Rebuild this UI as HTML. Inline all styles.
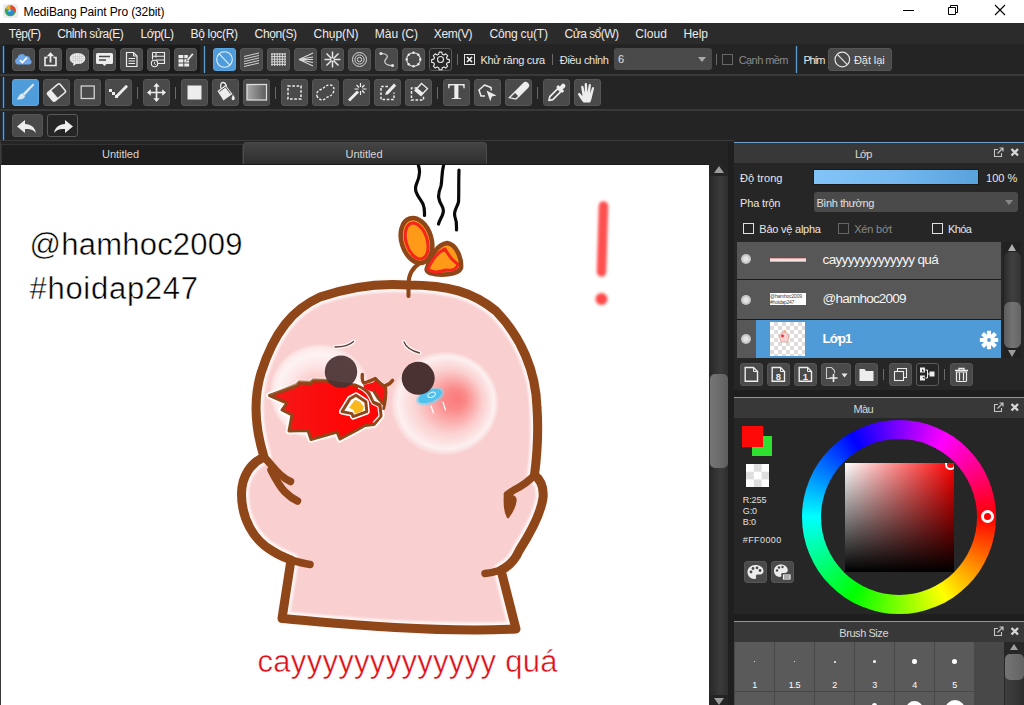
<!DOCTYPE html>
<html lang="vi">
<head>
<meta charset="utf-8">
<title>MediBang Paint Pro (32bit)</title>
<style>
*{box-sizing:border-box;margin:0;padding:0}
html,body{width:1024px;height:705px;overflow:hidden;background:#242424}
body{position:relative;font-family:"Liberation Sans","DejaVu Sans",sans-serif;font-size:12px;color:#e6e6e6}
.abs{position:absolute}
#title{left:0;top:0;width:1024px;height:23px;background:#fff;color:#000}
#title .t{left:23.400px;top:5px;font-size:12px;letter-spacing:-0.12px;white-space:nowrap}
#menu{left:0;top:23px;width:1024px;height:22px;background:#2b2b2b;border-bottom:1px solid #3c3c3c}
#menu span{position:absolute;top:4px;font-size:12px;white-space:nowrap;color:#ececec;letter-spacing:-0.2px}
#tb{left:0;top:44px;width:1024px;height:98px;background:#242424}
.hl{position:absolute;height:2px;background:#393939}
.btn{position:absolute;background:#4a4a4a;border:1px solid #555;border-radius:3px}
.btn.sel{background:#4f9cdb;border-color:#5aa6e2}
.btn svg{position:absolute;left:-1px;top:-1px;width:calc(100% + 2px);height:calc(100% + 2px)}
.vsep{position:absolute;width:1px;background:#6a6a6a}
.bl{position:absolute;width:1px;background:#5b9bd0;box-shadow:-1px 0 0 #1e3a55,1px 0 0 #1e3a55}
.sec{position:absolute;background:#1b1b1b}
.btn.dark{background:#262626;border-color:#5a5a5a}
.chk{position:absolute;width:11px;height:11px;border:1px solid #e0e0e0}
.chk svg{position:absolute;left:-1px;top:-1px}
.chk.dis{border-color:#666}
.lbl.dis{color:#8a8a8a}
.dd{position:absolute;background:#4a4a4a;border-radius:3px}
.dd span{position:absolute;left:4px;top:5px;font-size:11px;color:#e0e0e0;white-space:nowrap}
.dd i{position:absolute;right:6px;top:9px;border:4px solid transparent;border-top:5px solid #aaa;border-bottom:0}
.bt{position:absolute;white-space:nowrap;font-size:11px;letter-spacing:-0.08px;color:#e6e6e6}
.T{position:absolute;left:0;top:-2px;width:25px;text-align:center;font-family:"Liberation Serif","DejaVu Serif",serif;font-weight:bold;font-size:24px;line-height:27px;color:#ededed;transform:scaleX(1.08)}
.tab1{background:#1e1e1e;border:1px solid #333;border-bottom:0}
.tab2{background:linear-gradient(#444,#2e2e2e);border:1px solid #4a4a4a;border-bottom:0;border-radius:4px 4px 0 0}
.tab1 span,.tab2 span{position:absolute;left:0;width:100%;text-align:center;font-size:11px;letter-spacing:-0.04px;color:#d6d6d6}
.tab1 span{top:3px}.tab2 span{top:5px}
.phead{left:734px;width:290px;height:21px;background:#383838;border-top:1px solid #6fa3c8;position:absolute}
.phead span{position:absolute;top:5px;font-size:11px;letter-spacing:-0.2px;color:#d8d8d8;white-space:nowrap}
.lrow{left:737px;width:264px;background:#575757}
.eye{position:absolute;left:4px;top:50%;margin-top:-5px;width:10px;height:10px;border-radius:50%;background:radial-gradient(#e4e4e4 25%,#c4c4c4 60%)}
.ln{position:absolute;left:85.600px;font-size:13.5px;color:#f4f4f4;white-space:nowrap}
.sm{font-size:9px;color:#e0e0e0;white-space:nowrap;letter-spacing:-0.1px}
.cell{position:absolute;width:39px;background:#5a5a5a}
.cell i{position:absolute;border-radius:50%;background:#fff}
.cell span{position:absolute;left:0;width:100%;text-align:center;top:38px;font-size:9px;color:#fff;letter-spacing:-0.3px}
.lbl{position:absolute;white-space:nowrap;font-size:11px;letter-spacing:-0.3px;color:#e6e6e6}
</style>
</head>
<body>
<!-- TITLE BAR -->
<div id="title" class="abs">
  <svg class="abs" style="left:3px;top:4px" width="15" height="14" viewBox="0 0 15 14">
    <rect x="0" y="0" width="15" height="14" rx="2.500" fill="#ececec"/>
    <circle cx="7.300" cy="6.800" r="5.500" fill="#3aa857"/>
    <path d="M7.300 1.300a5.500 5.500 0 0 1 5.200 7.300l-5.200-1.800z" fill="#e9482c"/>
    <path d="M7.300 1.300a5.500 5.500 0 0 0-4.800 2.800l4.800 2.700z" fill="#f2b02a"/>
    <circle cx="7.600" cy="8" r="3" fill="#2d86d8"/>
    <circle cx="6.600" cy="6.600" r="1.500" fill="#7ed0e8"/>
  </svg>
  <div class="abs t">MediBang Paint Pro (32bit)</div>
  <svg class="abs" style="left:886px;top:0" width="138" height="23" viewBox="0 0 138 23">
    <path d="M17 10.5h11" stroke="#000" stroke-width="1" fill="none"/>
    <path d="M62.5 7.500h7v7h-7z M64.500 7.500v-2h7v7h-2" stroke="#000" stroke-width="1" fill="none"/>
    <path d="M109 5l10 10M119 5l-10 10" stroke="#000" stroke-width="1.1" fill="none"/>
  </svg>
</div>
<!-- MENU BAR -->
<div id="menu" class="abs">
  <span style="left:8.800px;letter-spacing:-0.76px">Tệp(F)</span>
  <span style="left:57.300px;letter-spacing:-0.44px">Chỉnh sửa(E)</span>
  <span style="left:140.600px;letter-spacing:-0.50px">Lớp(L)</span>
  <span style="left:190.600px;letter-spacing:-0.33px">Bộ lọc(R)</span>
  <span style="left:254.600px;letter-spacing:-0.38px">Chọn(S)</span>
  <span style="left:313.600px;letter-spacing:-0.06px">Chụp(N)</span>
  <span style="left:374.800px;letter-spacing:-0.02px">Màu (C)</span>
  <span style="left:433.800px;letter-spacing:-0.39px">Xem(V)</span>
  <span style="left:489.400px;letter-spacing:-0.16px">Công cụ(T)</span>
  <span style="left:564.600px;letter-spacing:-0.54px">Cửa sổ(W)</span>
  <span style="left:635.300px;letter-spacing:0.09px">Cloud</span>
  <span style="left:683.500px;letter-spacing:-0.06px">Help</span>
</div>

<!-- TOOLBARS -->
<div id="tb" class="abs">
  <div class="hl" style="left:0;top:30px;width:1024px"></div>
  <div class="hl" style="left:0;top:65px;width:1024px"></div>
  <div class="hl" style="left:0;top:96px;width:734px;height:1px"></div>
  <div class="sec" style="left:5px;top:1px;width:195px;height:28px"></div>
  <div class="bl" style="left:3px;top:2px;height:27px"></div>
  <div class="bl" style="left:3px;top:33px;height:31px"></div>
  <div class="bl" style="left:3px;top:68px;height:28px"></div>
  <div class="bl" style="left:204px;top:2px;height:27px"></div>
  <div class="bl" style="left:796px;top:2px;height:27px"></div>
  <div class="btn" style="left:12px;top:4px;width:23px;height:23px"><svg viewBox="0 0 23 23"><path d="M6.200 16.500a3.300 3.300 0 0 1-.6-6.500a4.200 4.200 0 0 1 7.800-1.900a3.600 3.600 0 0 1 4.800 3.500a2.600 2.600 0 0 1-.9 4.900z" fill="#6ea6e8"/><path d="M8 12.200l2.300 2.300l4.600-4.800" stroke="#fff" stroke-width="1.700" fill="none"/></svg></div>
  <div class="btn" style="left:39px;top:4px;width:23px;height:23px"><svg viewBox="0 0 23 23"><path d="M8.500 9.500h-2.500v8h11v-8h-2.500" stroke="#ededed" stroke-width="1.600" fill="none"/><path d="M11.500 14.500v-9" stroke="#ededed" stroke-width="1.800"/><path d="M7.800 8.200l3.700-4l3.700 4z" fill="#ededed"/></svg></div>
  <div class="btn" style="left:66px;top:4px;width:23px;height:23px"><svg viewBox="0 0 23 23"><ellipse cx="11.500" cy="10.500" rx="7.800" ry="5.600" fill="#ededed"/><path d="M7.500 14l-.3 4l4-2.800z" fill="#ededed"/><path d="M5 8.500h13M4 10.500h15M5 12.500h13M7.500 5v11M9.500 5v11M11.500 5v11M13.500 5v11M15.500 5v11" stroke="#bdbdbd" stroke-width=".5"/></svg></div>
  <div class="btn" style="left:93px;top:4px;width:23px;height:23px"><svg viewBox="0 0 23 23"><path d="M4.500 5h14a1.500 1.500 0 0 1 1.500 1.500v8a1.500 1.500 0 0 1-1.500 1.500h-5l-2 2l-2-2h-5a1.500 1.500 0 0 1-1.500-1.500v-8a1.500 1.500 0 0 1 1.500-1.500z" fill="#ededed"/><path d="M6 8.500h11M6 12h7" stroke="#4a4a4a" stroke-width="1.600"/></svg></div>
  <div class="btn" style="left:120px;top:4px;width:23px;height:23px"><svg viewBox="0 0 23 23"><path d="M6.500 4.500h7l3.500 3.500v10.500h-10.500z" stroke="#ededed" stroke-width="1.200" fill="none"/><path d="M13.500 4.500v3.500h3.500" stroke="#ededed" stroke-width="1" fill="none"/><path d="M8.500 10.500h6.500M8.500 13h6.500M8.500 15.500h6.500" stroke="#ededed" stroke-width="1.100"/></svg></div>
  <div class="btn" style="left:147px;top:4px;width:23px;height:23px"><svg viewBox="0 0 23 23"><path d="M5.500 4.500h12v11h-7M5.500 4.500v7M5.500 8.200h12M9 12h8.500M9 4.500v5" stroke="#ededed" stroke-width="1.100" fill="none"/><circle cx="7.500" cy="15.500" r="3.200" stroke="#ededed" stroke-width="1.100" fill="#4a4a4a"/><path d="M7.500 13.800v1.900l1.300 1" stroke="#ededed" stroke-width=".9" fill="none"/></svg></div>
  <div class="btn" style="left:174px;top:4px;width:23px;height:23px"><svg viewBox="0 0 23 23"><path d="M4.500 7h4.800v3.300h-4.800zM10.300 7h3.500v3.300h-3.500zM4.500 11.300h4.800v3.200h-4.800zM10.300 11.300h4.800v3.200h-4.800zM4.500 15.500h4.800v3h-4.800zM10.300 15.500h4.800v3h-4.800z" fill="#ededed"/><path d="M13 11l5.200-6l1.600 1.400l-5.200 6l-2.200.8z" fill="#ededed" stroke="#4a4a4a" stroke-width=".6"/></svg></div>
  <div class="btn sel" style="left:213px;top:4px;width:23px;height:23px"><svg viewBox="0 0 23 23"><circle cx="11.500" cy="11.500" r="7.800" stroke="#e4f0fa" stroke-width="1.100" fill="none"/><path d="M6.200 5.800l10.600 11.400" stroke="#e4f0fa" stroke-width="1.100"/></svg></div>
  <div class="btn" style="left:240px;top:4px;width:23px;height:23px"><svg viewBox="0 0 23 23"><path d="M4 8.500l15-3.500M4 11l15-3.500M4 13.500l15-3.500M4 16l15-3.500M4 18.500l15-3.500" stroke="#cfcfcf" stroke-width="1"/></svg></div>
  <div class="btn" style="left:267px;top:4px;width:23px;height:23px"><svg viewBox="0 0 23 23"><path d="M5 5v13M7.600 5v13M10.200 5v13M12.800 5v13M15.400 5v13M18 5v13M4 6h15M4 8.600h15M4 11.200h15M4 13.800h15M4 16.400h15" stroke="#d8d8d8" stroke-width="1"/></svg></div>
  <div class="btn" style="left:294px;top:4px;width:23px;height:23px"><svg viewBox="0 0 23 23"><path d="M5 11.500l14-6.500M5 11.500l14-2.500M5 11.500h14M5 11.500l14 3M5 11.500l14 6.500" stroke="#d8d8d8" stroke-width="1.100"/></svg></div>
  <div class="btn" style="left:321px;top:4px;width:23px;height:23px"><svg viewBox="0 0 23 23"><path d="M11.500 3.500v16M3.500 11.500h16M5.500 5.500l12 12M17.500 5.500l-12 12" stroke="#e4e4e4" stroke-width="1.500"/><circle cx="11.500" cy="11.500" r="1.300" fill="#4a4a4a"/></svg></div>
  <div class="btn" style="left:348px;top:4px;width:23px;height:23px"><svg viewBox="0 0 23 23"><circle cx="11.500" cy="11.500" r="7" stroke="#d8d8d8" stroke-width="1" fill="none"/><circle cx="11.500" cy="11.500" r="4.600" stroke="#d8d8d8" stroke-width="1" fill="none"/><circle cx="11.500" cy="11.500" r="2.200" stroke="#d8d8d8" stroke-width="1" fill="none"/></svg></div>
  <div class="btn" style="left:375px;top:4px;width:23px;height:23px"><svg viewBox="0 0 23 23"><path d="M6 5.500c6.500 0 7.500 3 5 5.500s-1.500 6.500 6.500 6.500" stroke="#c8c8c8" stroke-width="1.200" fill="none"/><circle cx="6" cy="5.500" r="1.600" fill="#e4e4e4"/><circle cx="17.500" cy="17.500" r="1.600" fill="#e4e4e4"/></svg></div>
  <div class="btn" style="left:402px;top:4px;width:23px;height:23px"><svg viewBox="0 0 23 23"><circle cx="11.500" cy="11.500" r="6.800" stroke="#e0e0e0" stroke-width="1.100" fill="none"/><g fill="#ededed"><circle cx="11.500" cy="4.700" r="1.200"/><circle cx="11.500" cy="18.300" r="1.200"/><circle cx="4.700" cy="11.500" r="1.200"/><circle cx="18.300" cy="11.500" r="1.200"/><circle cx="6.700" cy="6.700" r="1.200"/><circle cx="16.300" cy="6.700" r="1.200"/><circle cx="6.700" cy="16.300" r="1.200"/><circle cx="16.300" cy="16.300" r="1.200"/></g></svg></div>
  <div class="btn dark" style="left:429px;top:4px;width:23px;height:23px"><svg viewBox="0 0 23 23"><circle cx="11.500" cy="11.500" r="3" stroke="#e4e4e4" stroke-width="1.100" fill="none"/><path d="M10.200 4.500h2.600l.4 2l1.500.7l1.800-1.100l1.800 1.800l-1.100 1.800l.7 1.500l2 .4v2.600l-2 .4l-.7 1.500l1.100 1.800l-1.800 1.800l-1.800-1.100l-1.500.7l-.4 2h-2.600l-.4-2l-1.500-.7l-1.800 1.100l-1.800-1.800l1.100-1.800l-.7-1.500l-2-.4v-2.600l2-.4l.7-1.500l-1.100-1.800l1.800-1.800l1.800 1.100l1.500-.7z" stroke="#e4e4e4" stroke-width="1.100" fill="none" stroke-linejoin="round" transform="translate(-.58 -.58) scale(1.050)"/></svg></div>
  <div class="vsep" style="left:457px;top:10px;height:11px"></div>
  <div class="chk" style="left:464px;top:10px"><svg viewBox="0 0 11 11" width="11" height="11"><path d="M3 3l5 5M8 3l-5 5" stroke="#f0f0f0" stroke-width="1.700"/></svg></div>
  <div class="lbl" style="left:480.500px;top:10px;letter-spacing:-0.29px">Khử răng cưa</div>
  <div class="vsep" style="left:552px;top:10px;height:11px"></div>
  <div class="lbl" style="left:559.800px;top:10px;letter-spacing:-0.31px">Điều chỉnh</div>
  <div class="dd" style="left:614px;top:4px;width:98px;height:22px"><span>6</span><i></i></div>
  <div class="vsep" style="left:716px;top:10px;height:11px"></div>
  <div class="chk dis" style="left:722px;top:10px"></div>
  <div class="lbl dis" style="left:738.700px;top:10px;letter-spacing:-0.57px">Cạnh mềm</div>
  <div class="lbl" style="left:803.400px;top:10px;letter-spacing:-1.23px">Phím</div>
  <div class="btn" style="left:828px;top:4px;width:64px;height:23px"><svg viewBox="0 0 64 23"><circle cx="14.300" cy="11.500" r="7.300" stroke="#e4e4e4" stroke-width="1.200" fill="none"/><path d="M9.300 6.300l10 10.400" stroke="#e4e4e4" stroke-width="1.200"/></svg><span class="bt" style="left:25px;top:5px">Đặt lại</span></div>
  <div class="btn sel" style="left:12px;top:35px;width:27px;height:27px"><svg viewBox="0 0 27 27"><path d="M20.300 5c1.100-.8 2.300.4 1.500 1.500l-9 9.800l-1.900-1.900z" fill="#dbe9f5"/><path d="M10.300 14.200l2.600 2.600c.3 2.800-3.500 4.200-8.300 3.400c2-.8 1.800-5 5.700-6z" fill="#dbe9f5"/></svg></div>
  <div class="btn" style="left:43px;top:35px;width:27px;height:27px"><svg viewBox="0 0 27 27"><g transform="rotate(-40 13.500 13.500)"><rect x="5.500" y="8" width="16" height="11" rx="1.800" stroke="#ededed" stroke-width="1.500" fill="none"/><path d="M5.500 9.800a1.800 1.800 0 0 1 1.800-1.800h3.700v11h-3.700a1.800 1.800 0 0 1-1.800-1.800z" fill="#ededed"/></g></svg></div>
  <div class="btn" style="left:74px;top:35px;width:27px;height:27px"><svg viewBox="0 0 27 27"><rect x="7.200" y="7" width="13" height="12.500" stroke="#d4d4d4" stroke-width="1.300" fill="none"/></svg></div>
  <div class="btn" style="left:105px;top:35px;width:27px;height:27px"><svg viewBox="0 0 27 27"><path d="M11.500 15.500l9.500-9.800l2 2l-9.500 9.800l-3 1z" fill="#ededed"/><path d="M4 10h3v3h-3zM7 13h3v3h-3zM10 16h3v3h-3z" fill="#ededed"/></svg></div>
  <div class="vsep" style="left:137px;top:43px;height:12px"></div>
  <div class="btn" style="left:143px;top:35px;width:27px;height:27px"><svg viewBox="0 0 27 27"><path d="M13.500 6v15M6 13.500h15" stroke="#ededed" stroke-width="1.700"/><path d="M13.500 4l3.200 3.800h-6.400zM13.500 23l3.200-3.800h-6.400zM4 13.500l3.800-3.200v6.400zM23 13.500l-3.800-3.200v6.400z" fill="#ededed"/></svg></div>
  <div class="vsep" style="left:175px;top:43px;height:12px"></div>
  <div class="btn" style="left:181px;top:35px;width:27px;height:27px"><svg viewBox="0 0 27 27"><rect x="6.500" y="6.500" width="14" height="14" fill="#ededed"/></svg></div>
  <div class="btn" style="left:212px;top:35px;width:27px;height:27px"><svg viewBox="0 0 27 27"><path d="M5.500 12l8-6l7 9l-9 6.500z" fill="#ededed"/><path d="M9 9.500c-1-3.500 0-6 2-6s3 2 3.500 4" stroke="#ededed" stroke-width="1.300" fill="none"/><path d="M21 15.500c1.500 2.500 2.500 4 1.200 5.300c-1.200 1-3 0-2.500-2z" fill="#ededed"/><path d="M7.500 12.500l6-4.500l5 6.500" stroke="#4a4a4a" stroke-width="1" fill="none"/></svg></div>
  <div class="btn" style="left:243px;top:35px;width:27px;height:27px"><svg viewBox="0 0 27 27"><defs><linearGradient id="gd" x1="0" x2="1"><stop offset="0" stop-color="#a8a8a8"/><stop offset="1" stop-color="#5c5c5c"/></linearGradient></defs><rect x="4" y="5.500" width="19.500" height="15.500" fill="url(#gd)" stroke="#dcdcdc" stroke-width="1.300"/></svg></div>
  <div class="vsep" style="left:275px;top:43px;height:12px"></div>
  <div class="btn" style="left:281px;top:35px;width:27px;height:27px"><svg viewBox="0 0 27 27"><rect x="7" y="7" width="13" height="13" stroke="#ededed" stroke-width="1.500" fill="none" stroke-dasharray="2.600 1.700"/></svg></div>
  <div class="btn" style="left:312px;top:35px;width:27px;height:27px"><svg viewBox="0 0 27 27"><path d="M5.500 18c-2-3 0-6.500 3.500-7.500s4-4.500 8.500-4.500s5.500 4 3.500 8s-5 3-7.500 5.500s-6 1.500-8-1.500z" stroke="#ededed" stroke-width="1.400" fill="none" stroke-dasharray="2.400 1.600"/></svg></div>
  <div class="btn" style="left:343px;top:35px;width:27px;height:27px"><svg viewBox="0 0 27 27"><path d="M5 20.500l9-9l2 2l-9 9z" fill="#ededed"/><path d="M17.500 4v4M17.500 12v4M11.500 10h4M19.500 10h4M13.500 6l2.500 2.500M21.500 6l-2.500 2.500M21.500 14l-2.500-2.500" stroke="#ededed" stroke-width="1.200"/></svg></div>
  <div class="btn" style="left:374px;top:35px;width:27px;height:27px"><svg viewBox="0 0 27 27"><path d="M14 7.500h-7v13h13v-7" stroke="#ededed" stroke-width="1.500" fill="none" stroke-dasharray="2.600 1.700"/><path d="M12 13l8-8.500l2.200 2.200l-8 8.500l-3 .8z" fill="#ededed"/></svg></div>
  <div class="btn" style="left:405px;top:35px;width:27px;height:27px"><svg viewBox="0 0 27 27"><path d="M12 9h-5.500v12h12v-5" stroke="#ededed" stroke-width="1.500" fill="none" stroke-dasharray="2.600 1.700"/><path d="M16.500 4.500l6 5l-6.500 7l-6-5z" stroke="#ededed" stroke-width="1.300" fill="#4a4a4a"/><path d="M12.300 9l6 5l-2.300 2.500l-6-5z" fill="#ededed"/></svg></div>
  <div class="vsep" style="left:437px;top:43px;height:12px"></div>
  <div class="btn" style="left:443px;top:35px;width:27px;height:27px"><span class="T">T</span></div>
  <div class="btn" style="left:474px;top:35px;width:27px;height:27px"><svg viewBox="0 0 27 27"><path d="M11 17h-4l-2-6l5.500-5l6.500 2.500l.3 3" stroke="#ededed" stroke-width="1.500" fill="none" stroke-linejoin="round"/><path d="M12.500 11.500l10 5l-4.600 1l-1.600 4.800z" fill="#ededed"/></svg></div>
  <div class="btn" style="left:505px;top:35px;width:27px;height:27px"><svg viewBox="0 0 27 27"><g transform="rotate(45 13.500 13.500)"><path d="M10 3.500a3.500 3.500 0 0 1 7 0v12h-7z" fill="#ededed"/><path d="M10.700 15.500h5.600v4.500l-5.600 3.500z" fill="none" stroke="#ededed" stroke-width="1.400"/></g></svg></div>
  <div class="vsep" style="left:537px;top:43px;height:12px"></div>
  <div class="btn" style="left:543px;top:35px;width:27px;height:27px"><svg viewBox="0 0 27 27"><path d="M6 21.500l.8-3.800l8-8l3 3l-8 8z" stroke="#ededed" stroke-width="1.700" fill="none" stroke-linejoin="round"/><path d="M13.200 8l2-2l1.600 1.600l1.800-2.200a2.100 2.100 0 0 1 3.200 3.200l-2.200 1.800l1.600 1.600l-2 2z" fill="#ededed"/></svg></div>
  <div class="btn" style="left:574px;top:35px;width:27px;height:27px"><svg viewBox="0 0 27 27"><path d="M9.500 23.500c-1.800-2.200-4-5.200-5.300-7.800c-.6-1.300 1-2.200 2-1.100l2.300 2.700l-1.300-9.300c-.2-1.500 1.800-1.900 2.200-.4l1.500 6.400l-.2-8.700c0-1.600 2.200-1.600 2.300 0l.5 8.500l1.200-7.900c.3-1.500 2.400-1.200 2.200.3l-.8 8.300l1.900-5.600c.5-1.400 2.400-.8 2 .7l-2 8.200c-.4 2.200-1 4-2 5.700z" fill="#ededed"/></svg></div>
  <div class="btn" style="left:12px;top:70px;width:31px;height:23px"><svg viewBox="0 0 31 23"><path d="M5 12.500l8-6.500v4c6 0 10 3.500 11 9c-2.500-3.500-6-4.500-11-4v4z" fill="#ededed"/></svg></div>
  <div class="btn dark" style="left:47px;top:70px;width:31px;height:23px"><svg viewBox="0 0 31 23"><path d="M26 12.500l-8-6.500v4c-6 0-10 3.500-11 9c2.500-3.500 6-4.500 11-4v4z" fill="#ededed"/></svg></div>
</div>
<!-- TABS -->
<div class="abs" style="left:0;top:140px;width:734px;height:1px;background:#3a3a3a"></div>
<div class="abs" style="left:0;top:141px;width:734px;height:24px;background:#242424"></div>
<div class="abs tab1" style="left:1px;top:144px;width:242px;height:20px"><span style="left:-1.500px">Untitled</span></div>
<div class="abs tab2" style="left:243px;top:142px;width:244px;height:22px"><span style="left:-1px">Untitled</span></div>

<!-- CANVAS -->
<div class="abs" style="left:0;top:164px;width:734px;height:1px;background:#1a1a1a"></div>
<div class="abs" style="left:0;top:165px;width:709px;height:540px;background:#fff;overflow:hidden">
<svg class="abs" style="left:0;top:0" width="709" height="540" viewBox="0 165 709 540">
  <defs>
    <radialGradient id="cheekR" cx="0.5" cy="0.5" r="0.5" fx="0.62" fy="0.45">
      <stop offset="0" stop-color="#fb7a7a"/>
      <stop offset="0.2" stop-color="#fb8a8a"/>
      <stop offset="0.42" stop-color="#fbb0b0"/>
      <stop offset="0.6" stop-color="#fbd0d0"/>
      <stop offset="0.76" stop-color="#fce2e2"/>
      <stop offset="0.87" stop-color="#fdf0f0"/>
      <stop offset="0.95" stop-color="#fbdcdc"/>
      <stop offset="1" stop-color="#f9cfd0" stop-opacity="0"/>
    </radialGradient>
    <radialGradient id="cheekL" cx="0.5" cy="0.5" r="0.5" fx="0.46" fy="0.56">
      <stop offset="0" stop-color="#fb9a9a"/>
      <stop offset="0.2" stop-color="#fbb4b4"/>
      <stop offset="0.4" stop-color="#fccfcf"/>
      <stop offset="0.6" stop-color="#fde6e6"/>
      <stop offset="0.8" stop-color="#fef3f3"/>
      <stop offset="0.9" stop-color="#fdeaea"/>
      <stop offset="0.96" stop-color="#fbdcdc"/>
      <stop offset="1" stop-color="#f9cfd0" stop-opacity="0"/>
    </radialGradient>
    <filter id="b1" x="-50%" y="-20%" width="200%" height="140%"><feGaussianBlur stdDeviation="1.6"/></filter>
    <filter id="b2"><feGaussianBlur stdDeviation="1.2"/></filter>
    <path id="body" d="M408 285 C382 283 352 286 320 297 C293 309 274 332 261 373 C253 400 255 428 264 457 C251 463 241.500 476 241.500 494 C241.500 518 253 540 272.500 551 C280 556 286 558 291 560 L282 618.500 C321 622 361 626 395 627.500 C439 630 478 631 516 629 L501 570 C510 566 516 558 519.500 550 C531 532 541 512 543 498 C544 488 541 480 534.500 475 C537.500 452 538.500 430 537 408 C536 371 521 337 496 311 C473 292 448 285 408 285 Z"/>
  </defs>
  <!-- text layer -->
  <text x="29.500" y="254.700" font-family="'Liberation Sans','DejaVu Sans',sans-serif" font-size="31" fill="#000" stroke="#fff" stroke-width=".45" textLength="213" lengthAdjust="spacing">@hamhoc2009</text>
  <text x="29.500" y="298.500" font-family="'Liberation Sans','DejaVu Sans',sans-serif" font-size="31" fill="#000" stroke="#fff" stroke-width=".45" textLength="168.500" lengthAdjust="spacing">#hoidap247</text>
  <text x="257.500" y="672.200" font-family="'Liberation Sans','DejaVu Sans',sans-serif" font-size="31" fill="#de0f18" stroke="#fff" stroke-width=".45" textLength="300" lengthAdjust="spacing">cayyyyyyyyyyyyy quá</text>
  <!-- steam -->
  <g fill="none" stroke="#0a0a0a" stroke-width="3.200" stroke-linecap="round">
    <path d="M416.500 160 C421 170 420 176 416.500 184 C413 192 420 198 423 204 C425 209 424.500 212 424.500 215.500"/>
    <path d="M445 160 C441 172 442.500 178 441 186 C437 196 438.500 200 442 206 C446 213 440 218 438.500 224"/>
    <path d="M459 170 C458.500 184 459 194 458.500 202 C457 208 453 211 455 217 C457 222 456.500 226 456.500 230"/>
  </g>
  <!-- exclamation -->
  <g filter="url(#b1)">
    <path d="M603.500 206 L601.500 272" stroke="#ff5050" stroke-width="9.500" stroke-linecap="round" fill="none"/>
    <circle cx="601.500" cy="299" r="6" fill="#ff4848"/>
  </g>
  <!-- body -->
  <g>
  <use href="#body" fill="#f9cfd0" stroke="#fdeeee" stroke-width="12" stroke-linejoin="round"/>
  <use href="#body" fill="#f9cfd0"/>
  </g>
  <!-- cheeks -->
  <ellipse cx="320" cy="392" rx="51" ry="49" fill="url(#cheekL)"/>
  <ellipse cx="444.500" cy="403.500" rx="55" ry="53" fill="url(#cheekR)"/>
  <g>
  <!-- inner white glow along outline -->
  <use href="#body" fill="none" stroke="#fff" stroke-opacity=".8" stroke-width="15" stroke-linejoin="round" filter="url(#b2)"/>
  <!-- outline -->
  <use href="#body" fill="none" stroke="#8f4618" stroke-width="9" stroke-linejoin="round" stroke-linecap="round"/>
  <!-- arm fingers / extras -->
  <g fill="none" stroke="#8f4618" stroke-width="7.500" stroke-linecap="round" stroke-linejoin="round">
    <path d="M264 457 C270 463 275 470 280 474.500 C284 478 287 480 290.500 481.500"/>
    <path d="M271 470 C276 480 280 487 285 492 C289 496 293 499 297.500 501"/>
    <path d="M291 560 C298 562 304 564 310 564.500"/>
    <path d="M534.500 475 C530 480 522 486 514 490 C511 492 509 493 507.500 494.500"/>
    <path d="M501 570 C495 572 490 573 485 573.500"/>
  </g>
  <path d="M505 496 C509 494 515 496 515.500 500 C515 507 511 513 508 517 C505 512 504.500 505 505 496 Z" fill="#8f4618" stroke="#8f4618" stroke-width="2.500" stroke-linejoin="round"/>
  </g>
  <!-- sprout -->
  <path d="M408.500 296 L408.500 284 C408.500 276 412 268 420 263" fill="none" stroke="#8f4618" stroke-width="4" stroke-linecap="round"/>
  <g transform="rotate(-17 416.500 240.500)">
    <ellipse cx="416.500" cy="240.500" rx="15" ry="23" fill="#ff9a18" stroke="#8f4618" stroke-width="4.500"/>
    <ellipse cx="416.500" cy="241" rx="10.500" ry="18.500" fill="none" stroke="#f3251d" stroke-width="3"/>
  </g>
  <path d="M427 268 C430 256 438 244 447 243 C456 244 462 258 461 268 C458 275 440 276 430 273 C427 272 426 270 427 268 Z" fill="#ff9a18" stroke="#8f4618" stroke-width="4.500" stroke-linejoin="round"/>
  <path d="M428 269 C432 260 438 252 445 249 C449 256 454 262 458 264 C457 269 452 271 446 270 C440 272 432 273 428 269 Z" fill="none" stroke="#f3251d" stroke-width="3" stroke-linejoin="round"/>
  <!-- eyebrows -->
  <path d="M335 347 C342 347 349 346 353.500 341.500" fill="none" stroke="#fff" stroke-width="4" stroke-linecap="round" opacity=".8"/>
  <path d="M335 347 C342 347 349 346 353.500 341.500" fill="none" stroke="#5a3a34" stroke-width="1.300" stroke-linecap="round"/>
  <path d="M404 342 C406 347 412 351 419.500 353" fill="none" stroke="#fff" stroke-width="4" stroke-linecap="round" opacity=".8"/>
  <path d="M404 342 C406 347 412 351 419.500 353" fill="none" stroke="#5a3a34" stroke-width="1.300" stroke-linecap="round"/>
  <!-- flame -->
  <defs><linearGradient id="fl" x1="0" x2="1"><stop offset="0" stop-color="#f51a1a"/><stop offset="0.6" stop-color="#fd0808"/><stop offset="1" stop-color="#ff0505"/></linearGradient></defs>
  <path d="M269.500 395.500 L297 386 L299 383 L311 383.500 L313 381 L327 381 C338 384 348 384 355 385 C362 388 367 391 369 393 L373 402 L380 405 L381 416 L374 424.500 L365 425.500 L357 430 L340 439 L337 432 L311 439.500 L308 430.500 L289 431 L292 415 L282 410 L287 403 Z" fill="#f90f0f" stroke="#fff" stroke-width="7" stroke-linejoin="round" stroke-opacity=".85"/>
  <path d="M363.500 385 L373 382.500 L376 379.500 L380 384 L385 386.500 C386 392 385 398 383.500 403 L378 398 L374 392 L370 391 L364 388 Z" fill="#ff1010" stroke="#fff" stroke-width="5" stroke-linejoin="round" stroke-opacity=".8"/>
  <path d="M269.500 395.500 L297 386 L299 383 L311 383.500 L313 381 L327 381 C338 384 348 384 355 385 C362 388 367 391 369 393 L373 402 L380 405 L381 416 L374 424.500 L365 425.500 L357 430 L340 439 L337 432 L311 439.500 L308 430.500 L289 431 L292 415 L282 410 L287 403 Z" fill="url(#fl)" stroke="#8f4618" stroke-width="3" stroke-linejoin="round"/>
  <path d="M271 394.500 L296 384 L299 381 L310 381.500 L313 379 L326 379.500" fill="none" stroke="#a0603c" stroke-width="1.600" stroke-linejoin="round" stroke-linecap="round" opacity=".75"/>
  <path d="M363.500 385 L373 382.500 L376 379.500 L380 384 L385 386.500 C386 392 385 398 383.500 403 L378 398 L374 392 L370 391 L364 388 Z" fill="#ff1010"/>
  <path d="M358 388 C364 391 367 394 368.500 397 L372 404 L378 407 L379 416 L373 422.500" fill="none" stroke="#fff" stroke-width="1.300" stroke-linejoin="round" opacity=".9"/>
  <path d="M342 411.600 L350 398.700 L356 395.300 L365.800 401.700 L366.800 411.600 L353 416.600 L352 413.600 Z" fill="#fff" stroke="#fff" stroke-width="6" stroke-linejoin="round"/>
  <path d="M342 411.600 L350 398.700 L356 395.300 L365.800 401.700 L366.800 411.600 L353 416.600 L352 413.600 Z" fill="#fff" stroke="#8f4618" stroke-width="3" stroke-linejoin="round"/>
  <path d="M349 407.700 L355 399.700 L360 401.700 L363.800 406.700 L362.300 411.600 L355 413.600 L353 409.700 Z" fill="#fbb81c"/>
  <!-- nose squiggle -->
  <path d="M362.300 374.400 C362 379 362.500 382 364 383 C368 382 372 380 375.300 378.500 C378 381 381 385 384.700 385.800 C388 385 391 383 392.600 380.400" fill="none" stroke="#8f4618" stroke-width="3.400" stroke-linecap="round" stroke-linejoin="round"/>
  <path d="M385.700 386.800 C386.500 394 385.500 401 383.700 408.500 M374 391.500 L378 398 L383 403.500" fill="none" stroke="#8f4618" stroke-width="3" stroke-linecap="round" stroke-linejoin="round"/>
  <!-- tear -->
  <g transform="rotate(-22 430 396)">
    <ellipse cx="430" cy="396.500" rx="15" ry="7.500" fill="#7fd4f2" opacity=".6"/>
    <ellipse cx="430" cy="396" rx="12.500" ry="5.800" fill="#4fc3ee"/>
    <ellipse cx="432" cy="395.500" rx="4" ry="2.300" fill="none" stroke="#e8f8ff" stroke-width="1"/>
  </g>
  <path d="M431 406 L433.500 413 M443 402 L445.500 410" stroke="#fff" stroke-width="1.200" stroke-linecap="round"/>
  <!-- eyes -->
  <circle cx="341" cy="371.700" r="16.200" fill="#4a3132" opacity=".93"/>
  <circle cx="418.200" cy="378.300" r="16.500" fill="#4a3132"/>
</svg>
</div>
<div class="abs" style="left:0;top:142px;width:1px;height:563px;background:#3a3a3a"></div>
<!-- canvas v scrollbar -->
<div class="abs" style="left:709px;top:164px;width:19px;height:541px;background:linear-gradient(90deg,#272727,#3b3b3b 60%,#2e2e2e)"></div>
<div class="abs" style="left:709px;top:164px;width:19px;height:12px;background:#242424"></div>
<div class="abs" style="left:709px;top:695px;width:19px;height:10px;background:#242424"></div>
<div class="abs" style="left:714px;top:166px;border:5px solid transparent;border-bottom:7px solid #9c9c9c;border-top:0"></div>
<div class="abs" style="left:714px;top:698px;border:5px solid transparent;border-top:7px solid #9c9c9c;border-bottom:0"></div>
<div class="abs" style="left:710px;top:374px;width:18px;height:94px;border-radius:5px;background:linear-gradient(90deg,#757575,#6c6c6c 50%,#5e5e5e)"></div>
<div class="abs" style="left:728px;top:142px;width:6px;height:563px;background:#1f1f1f"></div>

<!-- PANELS -->
<div class="abs" style="left:734px;top:142px;width:290px;height:563px;background:#262626"></div>
<!-- Layer panel -->
<div class="abs phead" style="top:142px"><span style="left:121px;letter-spacing:-1.08px">Lớp</span>
  <svg class="abs" style="left:258px;top:3px" width="30" height="12" viewBox="0 0 30 12"><path d="M6 3.500h-3.500v7h7v-3.500" stroke="#c4c4c4" stroke-width="1.100" fill="none"/><path d="M5.500 7.500l5-5M7.500 2h3.500v3.500" stroke="#c4c4c4" stroke-width="1.200" fill="none"/><path d="M19.500 3l6.500 6.500M26 3l-6.500 6.500" stroke="#d8d8d8" stroke-width="2.300"/></svg>
</div>
<div class="lbl" style="left:740px;top:172px;letter-spacing:0.03px">Độ trong</div>
<div class="abs" style="left:813px;top:169px;width:166px;height:16px;background:#1a1a1a"></div>
<div class="abs" style="left:814px;top:170px;width:164px;height:14px;background:linear-gradient(90deg,#82c4f8,#74b8ef 50%,#58a2dd)"></div>
<div class="lbl" style="left:986px;top:172px;letter-spacing:0.05px">100 %</div>
<div class="lbl" style="left:740px;top:197px;letter-spacing:-0.16px">Pha trộn</div>
<div class="dd" style="left:814px;top:192px;width:204px;height:20px"><span style="left:2.400px;top:5px;letter-spacing:-0.38px">Bình thường</span><i style="top:8px;right:5px;border-top-color:#888"></i></div>
<div class="chk" style="left:743px;top:223px"></div><div class="lbl" style="left:759.300px;top:223px;letter-spacing:-0.23px">Bảo vệ alpha</div>
<div class="chk dis" style="left:838px;top:223px"></div><div class="lbl dis" style="left:854.200px;top:223px;letter-spacing:-0.2px">Xén bớt</div>
<div class="chk" style="left:932px;top:223px"></div><div class="lbl" style="left:948px;top:223px;letter-spacing:-0.57px">Khóa</div>
<!-- layer list -->
<div class="abs" style="left:737px;top:242px;width:264px;height:116px;background:#1a1a1a"></div>
<div class="abs lrow" style="top:242px;height:37px"><b class="eye" style="margin-top:-6.500px"></b><div class="abs" style="left:33px;top:16px;width:36px;height:4px;background:#f4e4e4;border-top:1px solid #e8a0a0;border-bottom:1px solid #e8a0a0"></div><span class="ln" style="top:10px;letter-spacing:-0.68px">cayyyyyyyyyyyyy quá</span></div>
<div class="abs lrow" style="top:280px;height:39px"><b class="eye"></b><div class="abs" style="left:33px;top:13px;width:36px;height:12px;background:#fff;font-size:5px;line-height:6px;color:#444;overflow:hidden;letter-spacing:-0.2px">@hamhoc2009<br>#hoidap247</div><span class="ln" style="top:11px;letter-spacing:-0.78px">@hamhoc2009</span></div>
<div class="abs lrow" style="top:320px;height:38px"><b class="eye"></b>
  <div class="abs" style="left:19px;top:0;width:245px;height:38px;background:#4f9bd8"></div>
  <div class="abs" style="left:33px;top:2px;width:35px;height:34px;background-color:#fff;background-image:linear-gradient(45deg,#e0dcdc 25%,transparent 25%,transparent 75%,#e0dcdc 75%),linear-gradient(45deg,#e0dcdc 25%,transparent 25%,transparent 75%,#e0dcdc 75%);background-size:8px 8px;background-position:0 0,4px 4px">
    <svg class="abs" style="left:8px;top:8px" width="12" height="14" viewBox="0 0 12 14"><path d="M6 2c3 0 4.500 2 4.500 5l-.5 5h-7l-1-4c-1-3 1-6 4-6z" fill="#f8d2d2" stroke="#d9a08a" stroke-width=".8"/><circle cx="4.500" cy="6" r="1.400" fill="#e0303a"/><path d="M6.500 .5l1 1.500" stroke="#e08a30" stroke-width="1"/></svg>
  </div>
  <span class="ln" style="top:11px;font-weight:bold;font-size:13px;color:#fff;letter-spacing:-0.89px">Lớp1</span>
  <svg class="abs" style="left:242px;top:10px" width="20" height="20" viewBox="-10 -10 20 20"><g fill="#fff"><circle r="5.600"/><g id="gt"><rect x="-2.100" y="-9.200" width="4.200" height="18.400" rx=".8"/></g><use href="#gt" transform="rotate(45)"/><use href="#gt" transform="rotate(90)"/><use href="#gt" transform="rotate(135)"/></g><circle r="1.900" fill="#4f9bd8"/></svg>
</div>
<!-- layer scrollbar -->
<div class="abs" style="left:1003px;top:242px;width:18px;height:116px;background:#222"></div>
<div class="abs" style="left:1004px;top:252px;width:17px;height:96px;border-radius:6px;background:linear-gradient(90deg,#2c2c2c,#404040 50%,#333)"></div>
<div class="abs" style="left:1004px;top:302px;width:17px;height:46px;border-radius:6px;background:linear-gradient(90deg,#5c5c5c,#737373 50%,#646464)"></div>
<div class="abs" style="left:1008px;top:244px;border:4.500px solid transparent;border-bottom:7px solid #b0b0b0;border-top:0"></div>
<div class="abs" style="left:1008px;top:350px;border:4.500px solid transparent;border-top:7px solid #9a9a9a;border-bottom:0"></div>
<div class="btn" style="left:740px;top:363px;width:23px;height:23px"><svg viewBox="0 0 23 23"><path d="M5.200 4.500h8.300l4 4v9.700h-12.300z" stroke="#ededed" stroke-width="1.400" fill="none"/><path d="M13.500 4.500v4h4" stroke="#ededed" stroke-width="1" fill="none"/></svg></div>
<div class="btn" style="left:767px;top:363px;width:23px;height:23px"><svg viewBox="0 0 23 23"><path d="M5.200 4.500h8.300l4 4v9.700h-12.300z" stroke="#ededed" stroke-width="1.400" fill="none"/><path d="M13.500 4.500v4h4" stroke="#ededed" stroke-width="1" fill="none"/><text x="11.300" y="16.800" font-size="9.500" font-family="Liberation Sans,sans-serif" font-weight="bold" fill="#ededed" text-anchor="middle">8</text></svg></div>
<div class="btn" style="left:794px;top:363px;width:23px;height:23px"><svg viewBox="0 0 23 23"><path d="M5.200 4.500h8.300l4 4v9.700h-12.300z" stroke="#ededed" stroke-width="1.400" fill="none"/><path d="M13.500 4.500v4h4" stroke="#ededed" stroke-width="1" fill="none"/><text x="11.300" y="16.800" font-size="9.500" font-family="Liberation Sans,sans-serif" font-weight="bold" fill="#ededed" text-anchor="middle">1</text></svg></div>
<div class="btn" style="left:821px;top:363px;width:30px;height:23px"><svg viewBox="0 0 30 23"><path d="M5.500 4.500h5l3 3v3M5.500 4.500v11h4" stroke="#c8c8c8" stroke-width="1.100" fill="none"/><path d="M12.500 11v8M8.500 15h8" stroke="#ededed" stroke-width="1.600"/><path d="M20.500 10.500h6l-3 4z" fill="#ededed"/></svg></div>
<div class="btn" style="left:855px;top:363px;width:23px;height:23px"><svg viewBox="0 0 23 23"><path d="M4.500 6h5l1.500 2h7.500v10h-14z" fill="#ededed"/></svg></div>
<div class="vsep" style="left:883px;top:369px;height:11px"></div>
<div class="btn" style="left:889px;top:363px;width:23px;height:23px"><svg viewBox="0 0 23 23"><path d="M8.500 8.500v-3h9v9h-3" stroke="#ededed" stroke-width="1.100" fill="none"/><rect x="5.500" y="8.500" width="9" height="9" stroke="#ededed" stroke-width="1.100" fill="none"/></svg></div>
<div class="btn dark" style="left:916px;top:363px;width:23px;height:23px"><svg viewBox="0 0 23 23"><rect x="4" y="4.500" width="5" height="5" fill="#ededed"/><rect x="4" y="12.500" width="5" height="5" fill="#ededed"/><rect x="13.500" y="8.500" width="5" height="5" fill="#ededed"/><path d="M6 6l2.500 2.500h-2.500zM6.500 14.500l2-1v2.500z" fill="#262626"/><path d="M9.500 7h2v8h-2M11.500 11h2" stroke="#ededed" stroke-width="1" fill="none"/></svg></div>
<div class="vsep" style="left:944px;top:369px;height:11px"></div>
<div class="btn" style="left:950px;top:363px;width:23px;height:23px"><svg viewBox="0 0 23 23"><path d="M5 7.500h13M9 7v-1.500h5v1.500" stroke="#ededed" stroke-width="1.300" fill="none"/><path d="M6.500 9h10v8.500a1 1 0 0 1-1 1h-8a1 1 0 0 1-1-1z" stroke="#ededed" stroke-width="1.200" fill="none"/><path d="M9.500 9.500v8M13.500 9.500v8" stroke="#ededed" stroke-width="1.200"/></svg></div>
<div class="abs" style="left:734px;top:390px;width:290px;height:7px;background:#1e1e1e"></div>
<div class="abs" style="left:734px;top:614px;width:290px;height:7px;background:#1e1e1e"></div>
<!-- Color panel -->
<div class="abs phead" style="top:397px"><span style="left:119.600px;letter-spacing:-0.65px">Màu</span>
  <svg class="abs" style="left:258px;top:3px" width="30" height="12" viewBox="0 0 30 12"><path d="M6 3.500h-3.500v7h7v-3.500" stroke="#c4c4c4" stroke-width="1.100" fill="none"/><path d="M5.500 7.500l5-5M7.500 2h3.500v3.500" stroke="#c4c4c4" stroke-width="1.200" fill="none"/><path d="M19.500 3l6.500 6.500M26 3l-6.500 6.500" stroke="#d8d8d8" stroke-width="2.300"/></svg>
</div>
<div class="abs" style="left:752px;top:436px;width:20px;height:20px;background:#30e030"></div>
<div class="abs" style="left:742px;top:426px;width:21px;height:21px;background:#ff0808"></div>
<div class="abs" style="left:745.500px;top:463.500px;width:23.500px;height:23px;background:conic-gradient(#dedede 25%,#fff 0 50%,#dedede 0 75%,#fff 0) 0 0/15.600px 15.400px"></div>
<div class="abs sm" style="left:742.800px;top:495px">R:255</div>
<div class="abs sm" style="left:742.800px;top:506px">G:0</div>
<div class="abs sm" style="left:742.800px;top:517px">B:0</div>
<div class="abs sm" style="left:742.800px;top:535px;letter-spacing:0.4px">#FF0000</div>
<div class="btn" style="left:744px;top:561px;width:23px;height:22px"><svg viewBox="0 0 23 22"><path d="M11.500 4c-4.500 0-8 3-8 7s3 7 7 7c1.500 0 2-1 1.500-2s0-2.500 1.500-2.500h2.500c2 0 3.500-1.500 3.500-3.500c0-3.500-3.500-6-8-6z" fill="#ededed"/><g fill="#4a4a4a"><circle cx="7" cy="11" r="1.400"/><circle cx="9" cy="7.500" r="1.400"/><circle cx="13" cy="6.800" r="1.400"/><circle cx="16" cy="9.500" r="1.400"/></g></svg></div>
<div class="btn" style="left:771px;top:561px;width:23px;height:22px"><svg viewBox="0 0 23 22"><path d="M10 3.500c-4 0-7 2.700-7 6.200s2.600 6.200 6 6.200c1.300 0 1.700-.9 1.300-1.800s0-2.100 1.300-2.100h2.200c1.700 0 3-1.300 3-3c0-3-3-5.500-6.800-5.500z" fill="#ededed"/><g fill="#4a4a4a"><circle cx="6" cy="9.500" r="1.200"/><circle cx="8" cy="6.500" r="1.200"/><circle cx="11.500" cy="6" r="1.200"/></g><rect x="11.500" y="13" width="8.500" height="6" fill="#ededed" stroke="#4a4a4a" stroke-width=".8"/><path d="M13 15h5.500M13 17h5.500" stroke="#4a4a4a" stroke-width=".8"/></svg></div>
<!-- wheel -->
<div class="abs" style="left:802px;top:420px;width:194px;height:194px;border-radius:50%;background:conic-gradient(from 90deg,#f00,#ff0,#0f0,#0ff,#00f,#f0f,#f00)"></div>
<div class="abs" style="left:821px;top:439px;width:156px;height:156px;border-radius:50%;background:#262626"></div>
<div class="abs" style="left:845px;top:463px;width:109px;height:109px;background:linear-gradient(to bottom,rgba(0,0,0,0),#000),linear-gradient(to right,#fff,#f00)"></div>
<div class="abs" style="left:980.500px;top:510px;width:13px;height:13px;border-radius:50%;border:3px solid #fff;background:#f00"></div>
<div class="abs" style="left:945px;top:459px;width:11px;height:11px;border-radius:50%;border:2px solid #fff;clip-path:inset(4px 2px 0 0)"></div>
<!-- Brush size panel -->
<div class="abs phead" style="top:621px"><span style="left:105.300px;letter-spacing:-0.44px">Brush Size</span>
  <svg class="abs" style="left:258px;top:3px" width="30" height="12" viewBox="0 0 30 12"><path d="M6 3.500h-3.500v7h7v-3.500" stroke="#c4c4c4" stroke-width="1.100" fill="none"/><path d="M5.500 7.500l5-5M7.500 2h3.500v3.500" stroke="#c4c4c4" stroke-width="1.200" fill="none"/><path d="M19.500 3l6.500 6.500M26 3l-6.500 6.500" stroke="#d8d8d8" stroke-width="2.300"/></svg>
</div>
<div class="abs" style="left:734px;top:642px;width:270px;height:63px;background:#484848"></div>
<div class="cell" style="left:735px;top:642px;height:49px"><i style="left:19.00px;top:19.00px;width:1.0px;height:1.0px"></i><span>1</span></div>
<div class="cell" style="left:775px;top:642px;height:49px"><i style="left:18.75px;top:18.75px;width:1.5px;height:1.5px"></i><span>1.5</span></div>
<div class="cell" style="left:815px;top:642px;height:49px"><i style="left:18.50px;top:18.50px;width:2px;height:2px"></i><span>2</span></div>
<div class="cell" style="left:855px;top:642px;height:49px"><i style="left:18.00px;top:18.00px;width:3px;height:3px"></i><span>3</span></div>
<div class="cell" style="left:895px;top:642px;height:49px"><i style="left:17.25px;top:17.25px;width:4.5px;height:4.5px"></i><span>4</span></div>
<div class="cell" style="left:935px;top:642px;height:49px"><i style="left:16.75px;top:16.75px;width:5.5px;height:5.5px"></i><span>5</span></div>
<div class="cell" style="left:735px;top:692px;height:13px;overflow:hidden"></div>
<div class="cell" style="left:775px;top:692px;height:13px;overflow:hidden"></div>
<div class="cell" style="left:815px;top:692px;height:13px;overflow:hidden"></div>
<div class="cell" style="left:855px;top:692px;height:13px;overflow:hidden"><i style="left:17.00px;top:11.00px;width:5px;height:5px"></i></div>
<div class="cell" style="left:895px;top:692px;height:13px;overflow:hidden"><i style="left:11.00px;top:9.00px;width:17px;height:17px"></i></div>
<div class="cell" style="left:935px;top:692px;height:13px;overflow:hidden"><i style="left:9.50px;top:7.50px;width:20px;height:20px"></i></div>
<div class="abs" style="left:1004px;top:642px;width:20px;height:63px;background:#272727"></div>
<div class="abs" style="left:1010px;top:644px;border:4px solid transparent;border-bottom:6px solid #a0a0a0;border-top:0"></div>
<div class="abs" style="left:1005px;top:654px;width:19px;height:51px;border-radius:6px 6px 0 0;background:linear-gradient(90deg,#3e3e3e,#383838 50%,#2c2c2c)"></div>
<div class="abs" style="left:1005px;top:654px;width:18.500px;height:26px;border-radius:5px;background:linear-gradient(90deg,#747474,#6c6c6c 50%,#626262)"></div>

</body>
</html>
